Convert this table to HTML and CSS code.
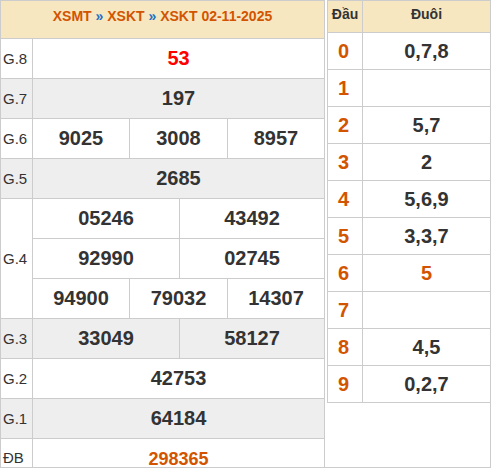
FILE: index.html
```html
<!DOCTYPE html>
<html lang="vi">
<head>
<meta charset="utf-8">
<link rel="stylesheet" href="styles.css">
</head>
<body>
<div class="wrap">
  <div class="kq">
    <div class="kq-title">XSMT <span class="sep">»</span> XSKT <span class="sep">»</span> XSKT 02-11-2025</div>

    <div class="lbl">G.8</div>
    <div class="val"><span class="num red">53</span></div>

    <div class="lbl alt">G.7</div>
    <div class="val alt"><span class="num">197</span></div>

    <div class="lbl">G.6</div>
    <div class="val multi c3">
      <div class="cell"><span class="num">9025</span></div>
      <div class="cell"><span class="num">3008</span></div>
      <div class="cell"><span class="num">8957</span></div>
    </div>

    <div class="lbl alt">G.5</div>
    <div class="val alt"><span class="num">2685</span></div>

    <div class="lbl g4">G.4</div>
    <div class="val multi c2">
      <div class="cell"><span class="num">05246</span></div>
      <div class="cell"><span class="num">43492</span></div>
    </div>
    <div class="val multi c2">
      <div class="cell"><span class="num">92990</span></div>
      <div class="cell"><span class="num">02745</span></div>
    </div>
    <div class="val multi c3">
      <div class="cell"><span class="num">94900</span></div>
      <div class="cell"><span class="num">79032</span></div>
      <div class="cell"><span class="num">14307</span></div>
    </div>

    <div class="lbl alt">G.3</div>
    <div class="val multi c2 alt-cells">
      <div class="cell"><span class="num">33049</span></div>
      <div class="cell"><span class="num">58127</span></div>
    </div>

    <div class="lbl">G.2</div>
    <div class="val"><span class="num">42753</span></div>

    <div class="lbl alt">G.1</div>
    <div class="val alt"><span class="num">64184</span></div>

    <div class="lbl db">ĐB</div>
    <div class="val db"><span class="num special">298365</span></div>
  </div>

  <div class="lt">
    <div class="lt-head">Đầu</div>
    <div class="lt-head">Đuôi</div>

    <div class="dau">0</div><div class="duoi">0,7,8</div>
    <div class="dau">1</div><div class="duoi"></div>
    <div class="dau">2</div><div class="duoi">5,7</div>
    <div class="dau">3</div><div class="duoi">2</div>
    <div class="dau">4</div><div class="duoi">5,6,9</div>
    <div class="dau">5</div><div class="duoi">3,3,7</div>
    <div class="dau">6</div><div class="duoi hl">5</div>
    <div class="dau">7</div><div class="duoi"></div>
    <div class="dau">8</div><div class="duoi">4,5</div>
    <div class="dau">9</div><div class="duoi">0,2,7</div>
  </div>
</div>
</body>
</html>
```

FILE: styles.css
```css
html, body {
  margin: 0;
  padding: 0;
  background: #fff;
}

body {
  font-family: "Liberation Sans", Arial, sans-serif;
  color: #333;
}

.wrap {
  width: 491px;
  height: 468px;
  box-sizing: border-box;
  border-right: 1px solid #ccc;
  border-bottom: 1px solid #ccc;
  overflow: hidden;
  display: flex;
  align-items: flex-start;
  gap: 2px;
}

/* left result table */
.kq {
  flex-shrink: 0;
  width: 325px;
  box-sizing: border-box;
  border: 1px solid #ccc;
  background: #ccc;
  display: grid;
  grid-template-columns: 31px 291px;
  grid-template-rows: 37px;
  grid-auto-rows: 39px;
  gap: 1px;
}

.kq-title {
  grid-column: 1 / -1;
  background: #f6e7c1;
  color: #d35400;
  font-weight: bold;
  font-size: 14px;
  line-height: 17px;
  text-align: center;
  padding-top: 7px;
  box-sizing: border-box;
}

.sep {
  color: #1f6fc5;
}

.lbl {
  background: #fff;
  font-size: 15px;
  display: flex;
  align-items: center;
  padding-left: 2px;
}

.lbl.g4 {
  grid-row: span 3;
}

.val {
  background: #fff;
  display: flex;
  align-items: center;
  justify-content: center;
}

.alt {
  background: #eee;
}

.val.multi {
  display: grid;
  align-items: stretch;
  grid-template-rows: 39px;
  gap: 1px;
  background: #ccc;
}

.val.c3 {
  grid-template-columns: 96px 97px 96px;
}

.val.c2 {
  grid-template-columns: 146px 144px;
}

.cell {
  background: #fff;
  display: flex;
  align-items: center;
  justify-content: center;
}

.alt-cells .cell {
  background: #eee;
}

.num {
  font-weight: bold;
  font-size: 20px;
  color: #333;
}

.num.red {
  color: #f00;
}

.num.special {
  color: #d35400;
  font-size: 18px;
}

.db {
  align-items: flex-start;
  padding-top: 10px;
}

/* right loto table */
.lt {
  flex-shrink: 0;
  width: 163px;
  box-sizing: border-box;
  border-top: 1px solid #ccc;
  border-left: 1px solid #ccc;
  border-bottom: 1px solid #ccc;
  background: #ccc;
  display: grid;
  grid-template-columns: 34px 127px;
  grid-template-rows: 31px;
  grid-auto-rows: 36px;
  column-gap: 1px;
  row-gap: 1px;
}

.lt-head {
  background: #f6e7c1;
  font-weight: bold;
  font-size: 14px;
  line-height: 17px;
  text-align: center;
  padding-top: 5px;
  box-sizing: border-box;
}

.dau,
.duoi {
  background: #fff;
  display: flex;
  align-items: center;
  justify-content: center;
  font-weight: bold;
  font-size: 20px;
}

.dau {
  color: #d35400;
  padding-right: 3px;
}

.duoi {
  color: #333;
}

.duoi.hl {
  color: #d35400;
}
```
